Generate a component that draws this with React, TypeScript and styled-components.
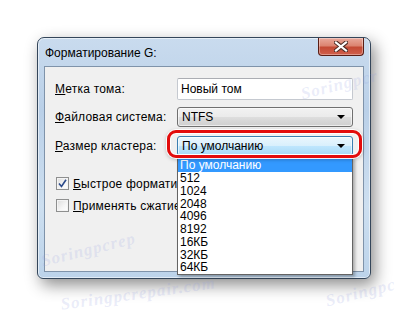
import React from 'react';
import styled, { createGlobalStyle } from 'styled-components';

const GlobalStyle = createGlobalStyle`
  html, body {
    margin: 0;
    padding: 0;
    background: #ffffff;
    font-family: "Liberation Sans", Arial, sans-serif;
  }
`;

const Stage = styled.div`
  position: relative;
  width: 408px;
  height: 317px;
  overflow: hidden;
  padding: 37px 0 0 37px;
  box-sizing: border-box;
  background: #ffffff;
`;

const Watermark = styled.div<{ $x: number; $y: number; $rot: number }>`
  position: absolute;
  left: ${(p) => p.$x}px;
  top: ${(p) => p.$y}px;
  transform: rotate(${(p) => p.$rot}deg);
  font-family: "Liberation Serif", serif;
  font-style: italic;
  font-weight: bold;
  font-size: 17px;
  letter-spacing: 1px;
  color: rgba(150, 160, 225, 0.2);
  pointer-events: none;
  white-space: nowrap;
  z-index: 5;
`;

const Window = styled.div`
  position: relative;
  width: 334px;
  height: 242px;
  box-sizing: border-box;
  border: 1px solid #34465a;
  border-radius: 7px 7px 6px 6px;
  background: linear-gradient(180deg, #c9dbee 0%, #bad0e8 30%, #cddff0 70%, #bcd3ea 100%);
  box-shadow: 4px 6px 16px rgba(0, 0, 0, 0.45), inset 0 0 0 1px rgba(255, 255, 255, 0.55);
  display: flex;
  flex-direction: column;
`;

const TitleBar = styled.div`
  height: 28px;
  display: flex;
  justify-content: space-between;
  align-items: flex-start;
  padding: 0 6px 0 7px;
`;

const Title = styled.div`
  font-size: 12px;
  color: #000;
  line-height: 12px;
  margin-top: 9px;
`;

const CloseButton = styled.div`
  width: 46px;
  height: 18px;
  box-sizing: border-box;
  border: 1px solid #5a1d14;
  border-top: none;
  border-radius: 0 0 4px 4px;
  background: linear-gradient(180deg, #e9a99c 0%, #dc8471 45%, #c44a35 55%, #d0604c 100%);
  box-shadow: inset 0 0 0 1px rgba(255, 255, 255, 0.35);
  display: flex;
  align-items: center;
  justify-content: center;
`;

const Client = styled.div`
  position: relative;
  flex: 1;
  margin: 0 6px 6px 6px;
  background: #f0f0f0;
  border: 1px solid #7f93aa;
  padding: 11px 10px 0 10px;
  box-sizing: border-box;
`;

const FieldRow = styled.div<{ $gap: number }>`
  display: grid;
  grid-template-columns: 122px 176px;
  align-items: center;
  margin-bottom: ${(p) => p.$gap}px;
`;

const Label = styled.div`
  font-size: 12px;
  letter-spacing: 0.2px;
  color: #000;
  & u {
    text-decoration: underline;
    text-underline-offset: 1px;
  }
`;

const TextBox = styled.div`
  height: 22px;
  box-sizing: border-box;
  border: 1px solid #c5c9d0;
  border-top-color: #abadb3;
  border-radius: 2px;
  background: #fff;
  font-size: 12px;
  line-height: 20px;
  padding-left: 3px;
  color: #000;
`;

const ComboWrap = styled.div`
  position: relative;
`;

const Combo = styled.div<{ $active?: boolean }>`
  position: relative;
  height: 20px;
  box-sizing: border-box;
  border: 1px solid ${(p) => (p.$active ? '#3c7fb1' : '#707070')};
  border-radius: 3px;
  background: ${(p) =>
    p.$active
      ? 'linear-gradient(180deg, #eaf6fd 0%, #d9f0fc 48%, #bee6fd 52%, #a7d9f5 100%)'
      : 'linear-gradient(180deg, #f2f2f2 0%, #ebebeb 48%, #dddddd 52%, #cfcfcf 100%)'};
  box-shadow: inset 0 0 0 1px rgba(255, 255, 255, 0.6);
  font-size: 12px;
  line-height: 18px;
  padding-left: 4px;
  color: #000;
  z-index: 2;
`;

const Arrow = styled.span`
  position: absolute;
  right: 7px;
  top: 7px;
  width: 0;
  height: 0;
  border-left: 4px solid transparent;
  border-right: 4px solid transparent;
  border-top: 4px solid #000;
`;

const Ring = styled.div`
  position: absolute;
  top: -6px;
  bottom: -2px;
  left: -10px;
  right: -9px;
  border: 3px solid #e30b0b;
  border-radius: 9px;
  box-shadow: 0 0 0 1px rgba(255, 255, 255, 0.9), 0 1px 4px rgba(0, 0, 0, 0.35),
    inset 0 0 0 1px rgba(255, 255, 255, 0.9);
  z-index: 4;
  pointer-events: none;
`;

const List = styled.div`
  position: absolute;
  left: 0;
  right: 0;
  top: calc(100% + 1px);
  background: #fff;
  border: 1px solid #646464;
  box-shadow: 2px 2px 3px rgba(0, 0, 0, 0.3);
  z-index: 3;
`;

const Item = styled.div<{ $selected?: boolean }>`
  height: ${(p) => (p.$selected ? '14px' : '12.75px')};
  line-height: ${(p) => (p.$selected ? '15px' : '12.75px')};
  font-size: 12px;
  padding-left: 2px;
  overflow: hidden;
  color: ${(p) => (p.$selected ? '#fff' : '#000')};
  background: ${(p) => (p.$selected ? '#3399ff' : 'transparent')};
`;

const CheckRow = styled.div<{ $top: number }>`
  display: flex;
  align-items: center;
  gap: 4px;
  margin-top: ${(p) => p.$top}px;
  padding-left: 1px;
  font-size: 12px;
  letter-spacing: 0.2px;
  color: #000;
  height: 13px;
  white-space: nowrap;
`;

const CheckText = styled.span`
  display: block;
  max-width: 104px;
  overflow: hidden;
`;

const CheckBox = styled.div`
  width: 13px;
  height: 13px;
  flex: none;
  box-sizing: border-box;
  border: 1px solid #8e8f8f;
  background: linear-gradient(135deg, #dcdcdc 0%, #f6f6f6 60%, #ffffff 100%);
  box-shadow: inset 0 0 0 1px #f4f4f4;
  display: flex;
  align-items: center;
  justify-content: center;
`;

const CloseGlyph = () => (
  <svg width="14" height="11" viewBox="0 0 14 11">
    <path d="M2 1.5 L12 9.5 M12 1.5 L2 9.5" stroke="#4a2a24" strokeWidth="4.2" strokeLinecap="square" />
    <path d="M2 1.5 L12 9.5 M12 1.5 L2 9.5" stroke="#ffffff" strokeWidth="2.2" strokeLinecap="square" />
  </svg>
);

const Tick = () => (
  <svg width="9" height="9" viewBox="0 0 9 9">
    <path d="M1 4.5 L3.5 7.5 L8 0.8" fill="none" stroke="#2b4a8a" strokeWidth="1.6" />
  </svg>
);

const sizes = ['По умолчанию', '512', '1024', '2048', '4096', '8192', '16КБ', '32КБ', '64КБ'];

const App: React.FC = () => {
  return (
    <Stage>
      <GlobalStyle />
      <Window>
        <TitleBar>
          <Title>Форматирование G:</Title>
          <CloseButton>
            <CloseGlyph />
          </CloseButton>
        </TitleBar>
        <Client>
          <FieldRow $gap={7}>
            <Label>
              <u>М</u>етка тома:
            </Label>
            <TextBox>Новый том</TextBox>
          </FieldRow>
          <FieldRow $gap={9}>
            <Label>
              <u>Ф</u>айловая система:
            </Label>
            <Combo>
              NTFS
              <Arrow />
            </Combo>
          </FieldRow>
          <FieldRow $gap={0}>
            <Label>
              <u>Р</u>азмер кластера:
            </Label>
            <ComboWrap>
              <Combo $active>
                По умолчанию
                <Arrow />
              </Combo>
              <Ring />
              <List>
                {sizes.map((s, i) => (
                  <Item key={s} $selected={i === 0}>
                    {s}
                  </Item>
                ))}
              </List>
            </ComboWrap>
          </FieldRow>
          <CheckRow $top={21}>
            <CheckBox>
              <Tick />
            </CheckBox>
            <CheckText>
              <u>Б</u>ыстрое форматирование
            </CheckText>
          </CheckRow>
          <CheckRow $top={9}>
            <CheckBox />
            <CheckText>
              <u>П</u>рименять сжатие файлов и папок
            </CheckText>
          </CheckRow>
        </Client>
      </Window>
      <Watermark $x={300} $y={75} $rot={-14}>Soringpcr</Watermark>
      <Watermark $x={60} $y={284} $rot={-8}>Soringpcrepair.com</Watermark>
      <Watermark $x={40} $y={240} $rot={-14}>Soringpcrep</Watermark>
      <Watermark $x={325} $y={283} $rot={-14}>Soringpc</Watermark>
    </Stage>
  );
};

export default App;
